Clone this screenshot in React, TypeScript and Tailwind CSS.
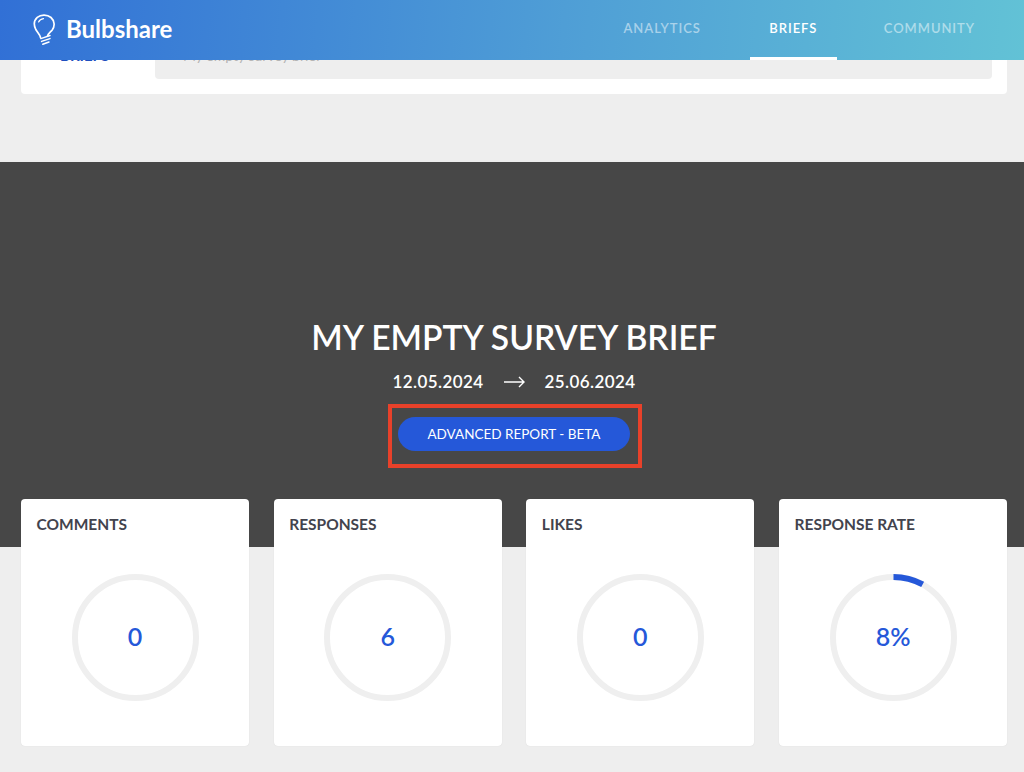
import React from "react";

const font = { fontFamily: '"Lato", "Noto Sans", sans-serif' };

function Bulb() {
  return (
    <svg width="24" height="32" viewBox="0 0 24 32" fill="none" stroke="white" strokeLinecap="round" strokeLinejoin="round">
      <path d="M7.5 23.5 C7 20.5 4.5 18.5 2.8 15.5 C0.6 11 1.2 6.2 4.3 3.4 C8 0.2 14.2 0.4 18 3.5 C21.8 7 22 12.4 19.2 16 C17.2 18.4 15.2 19.4 14.5 22.2" strokeWidth="1.7" />
      <path d="M10.5 4.6 C8 5 6.4 6.2 5.6 8" strokeWidth="1.2" />
      <path d="M7.8 24.6 L17 21.5 M8.6 27.4 L17 24.6 M9.8 30.2 L16 28" strokeWidth="1.5" />
    </svg>
  );
}

function Stat({ label, value, progress }: { label: string; value: string; progress?: number }) {
  const r = 60.5;
  const c = 2 * Math.PI * r;
  return (
    <div className="flex-1 h-[247px] bg-white rounded-[4px] pl-[15.5px] pt-[15px] shadow-[0_0_1px_rgba(0,0,0,0.15)]">
      <div className="text-[15.5px] leading-[20px] font-bold text-[#42434d]">{label}</div>
      <div className="flex justify-center mt-[40px] -ml-[15.5px]">
        <div className="relative w-[127px] h-[127px]">
          <svg width="127" height="127" viewBox="0 0 127 127">
            <circle cx="63.5" cy="63.5" r={r} fill="none" stroke="#efefef" strokeWidth="6" />
            {progress ? (
              <circle
                cx="63.5"
                cy="63.5"
                r={r}
                fill="none"
                stroke="#2558d9"
                strokeWidth="6"
                strokeDasharray={`${c * progress} ${c}`}
                transform="rotate(-90 63.5 63.5)"
              />
            ) : null}
          </svg>
          <div className="absolute inset-0 flex items-center justify-center pb-[2px] text-[25px] font-semibold text-[#2558d9]">{value}</div>
        </div>
      </div>
    </div>
  );
}

export default function App() {
  return (
    <div className="w-[1024px] h-[772px] overflow-hidden bg-[#eeeeee]" style={font}>
      <header className="h-[60px] flex items-center justify-between bg-[linear-gradient(95deg,#3170d6_0%,#4f9ed6_55%,#62c2d6_100%)]">
        <div className="flex items-center pl-[33px] gap-[9px]">
          <Bulb />
          <span className="text-[24px] font-bold text-white -mt-[3px]">Bulbshare</span>
        </div>
        <nav className="flex h-full text-[13px] font-semibold tracking-[0.95px] pr-[49px]">
          <a className="text-white/50 flex items-center mr-[49px] -mt-[3px]">ANALYTICS</a>
          <a className="relative text-white flex items-center justify-center w-[87px] mr-[47px]">
            <span className="-mt-[3px]">BRIEFS</span>
            <span className="absolute left-0 right-0 bottom-0 h-[3px] bg-white" />
          </a>
          <a className="text-white/50 flex items-center -mt-[3px]">COMMUNITY</a>
        </nav>
      </header>

      <div className="ml-[21px] mr-[17px] h-[34px] bg-white rounded-b-[4px] flex pr-[15px]">
        <div className="w-[134px] h-[19px] overflow-hidden pl-[39px] text-[15px] leading-[20px] font-bold text-[#1f4fbf]">
          <div className="-mt-[15px]">BRIEFS</div>
        </div>
        <div className="flex-1 h-[19px] bg-[#eeeeee] rounded-b-[4px] overflow-hidden pl-[28px] text-[14px] leading-[20px] text-[#b5b5b5]">
          <div className="-mt-[14px]">My empty survey brief</div>
        </div>
      </div>

      <section className="mt-[68px] h-[385px] bg-[#474747] flex flex-col items-center pt-[155px] pl-[4px] text-white">
        <h1 className="text-[33.6px] leading-[40px] font-semibold">MY EMPTY SURVEY BRIEF</h1>
        <div className="mt-[14px] flex items-center text-[17px] leading-[22px] font-semibold tracking-[0.4px]">
          <span>12.05.2024</span>
          <svg className="mx-[20px]" width="21" height="12" viewBox="0 0 21 12" fill="none" stroke="white" strokeWidth="1.4">
            <path d="M0 6 H20 M15 1 L20 6 L15 11" />
          </svg>
          <span>25.06.2024</span>
        </div>
        <div className="mt-[11px] ml-[2px] border-[4px] border-[#e8412a] w-[254px] h-[64px] flex items-center justify-center pb-[4px] pr-[2px]">
          <button className="w-[232px] h-[34px] rounded-full bg-[#2558d9] text-[13.5px] text-white">ADVANCED REPORT - BETA</button>
        </div>
      </section>

      <div className="-mt-[48px] ml-[21px] mr-[17px] flex gap-[24.67px]">
        <Stat label="COMMENTS" value="0" />
        <Stat label="RESPONSES" value="6" />
        <Stat label="LIKES" value="0" />
        <Stat label="RESPONSE RATE" value="8%" progress={0.08} />
      </div>
    </div>
  );
}
